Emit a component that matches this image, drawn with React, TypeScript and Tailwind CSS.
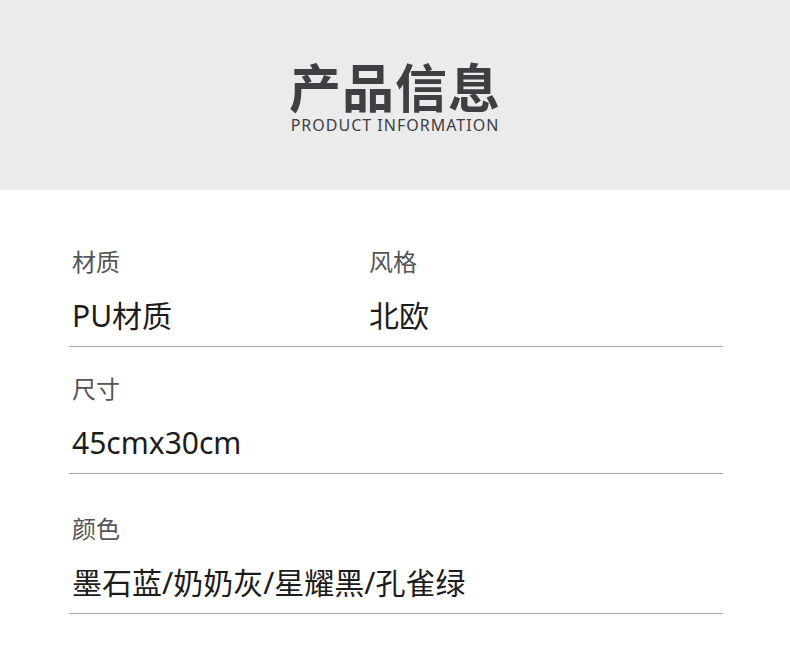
import React from 'react';

const font = { fontFamily: '"Noto Sans", "Noto Sans CJK SC", sans-serif' };

type Cell = { label: string; value: string };

const Row = ({ cells, className }: { cells: Cell[]; className?: string }) => (
  <div className={`flex border-b border-[#a8a8a8] pb-[15px] pl-[3px] ${className}`}>
    {cells.map((c) => (
      <div key={c.label} className="w-[297px] shrink-0">
        <div className="text-[24px] leading-[24px] text-[#555555]">{c.label}</div>
        <div className="mt-[27px] text-[30px] leading-[30px] text-[#1c1c1c] whitespace-nowrap">{c.value}</div>
      </div>
    ))}
  </div>
);

const App: React.FC = () => {
  return (
    <div style={font} className="w-[790px] h-[647px] bg-white overflow-hidden">
      {/* header band */}
      <div className="h-[190px] bg-[#ebebeb] flex flex-col items-center pt-[60px]">
        <h1 className="text-[52px] leading-[56px] font-bold text-[#3e3f43] tracking-[1px]">产品信息</h1>
        <p className="text-[16px] leading-[18px] text-[#3e3f43] tracking-[1px]">PRODUCT INFORMATION</p>
      </div>

      <div className="ml-[69px] w-[654px] pt-[60px]">
        <Row cells={[{ label: '材质', value: 'PU材质' }, { label: '风格', value: '北欧' }]} />
        <Row className="pt-[30px]" cells={[{ label: '尺寸', value: '45cmx30cm' }]} />
        <Row className="pt-[43px]" cells={[{ label: '颜色', value: '墨石蓝/奶奶灰/星耀黑/孔雀绿' }]} />
      </div>
    </div>
  );
};

export default App;
